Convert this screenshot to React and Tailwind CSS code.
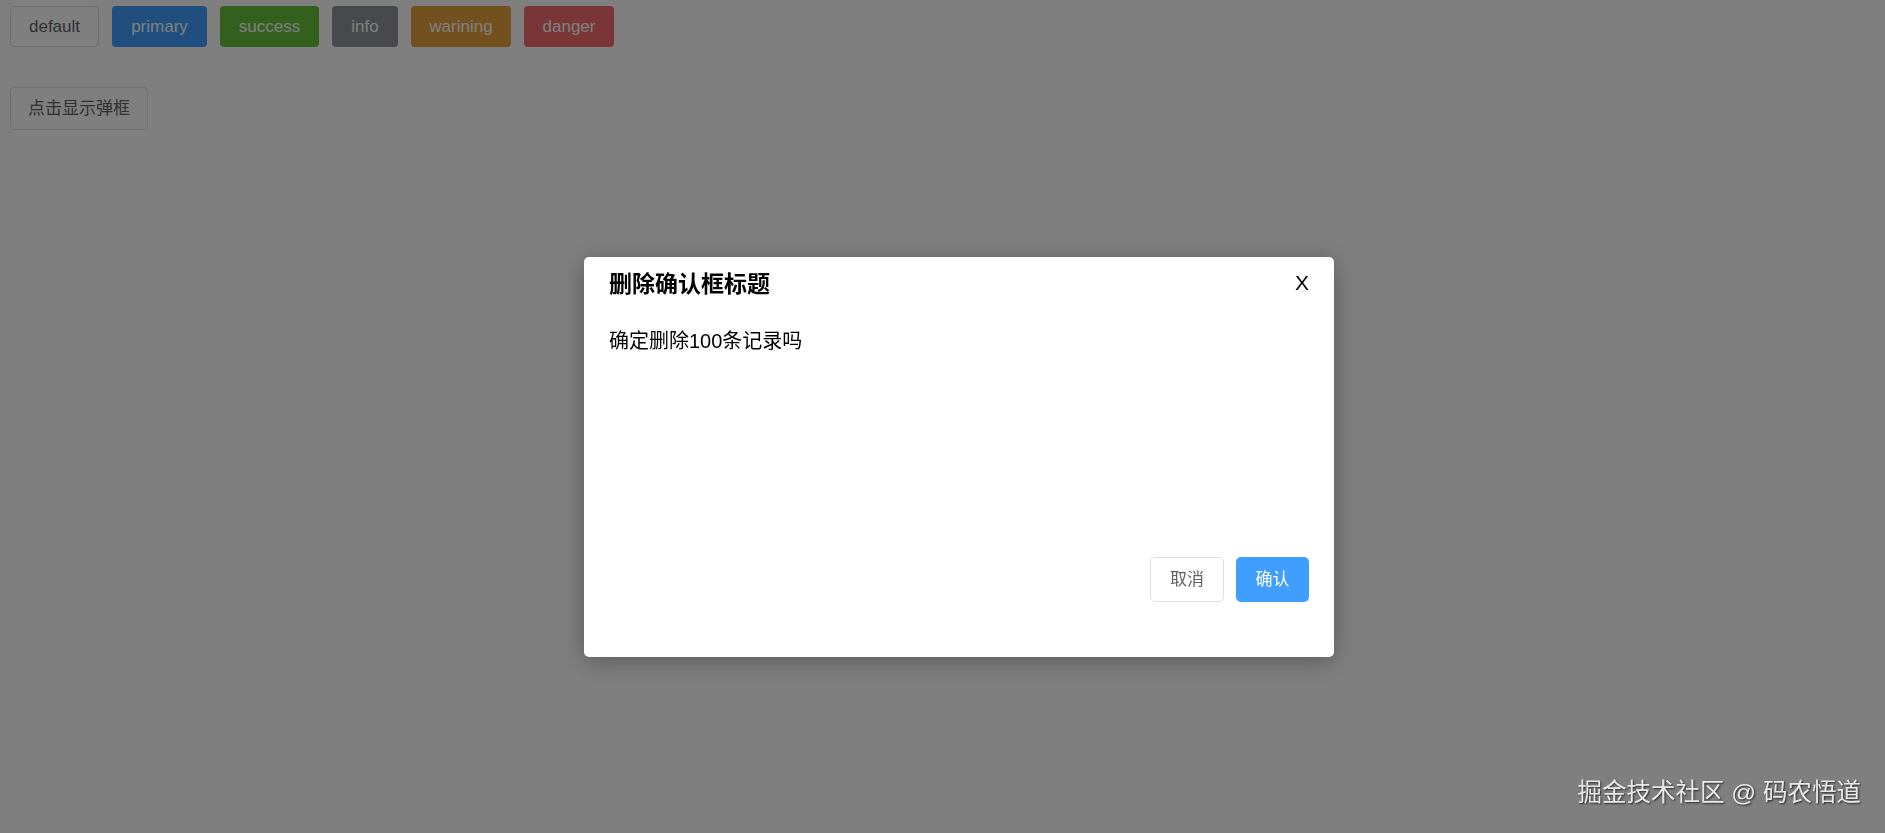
import React from "react";

const buttons = [
  { label: "default", cls: "bg-white text-[#606266] border border-[#dcdfe6] w-[89px]" },
  { label: "primary", cls: "bg-[#409eff] text-white w-[95px]" },
  { label: "success", cls: "bg-[#67c23a] text-white w-[99px]" },
  { label: "info", cls: "bg-[#909399] text-white w-[66px]" },
  { label: "warining", cls: "bg-[#e6a23c] text-white w-[100px]" },
  { label: "danger", cls: "bg-[#f56c6c] text-white w-[90px]" },
];

const font = "font-['Liberation_Sans','Noto_Sans_CJK_SC',sans-serif]";

const ConfirmDialog = ({ title, content }) => {
  return (
    <div className="fixed inset-0 bg-black/50 flex items-start justify-center pt-[257px] pl-[33px]">
      <div className="w-[750px] h-[400px] bg-white rounded-[5px] shadow-[0_4px_24px_rgba(0,0,0,0.3)] flex flex-col">
        {/* header */}
        <div className="flex items-center justify-between px-[25px] pt-[11px]">
          <h2 className="text-[23px] leading-[32px] font-bold text-black">{title}</h2>
          <button className="text-[21px] leading-[28px] -mt-[3px] text-black">X</button>
        </div>

        {/* body */}
        <div className="flex-1 px-[25px] pt-[27px] text-[20px] leading-[28px] text-black">
          {content}
        </div>

        {/* footer */}
        <div className="flex justify-end gap-[12px] px-[25px] pb-[55px]">
          <button className="w-[74px] h-[45px] rounded-[5px] border border-[#dcdfe6] bg-white text-[#606266] text-[17px]">
            取消
          </button>
          <button className="w-[73px] h-[45px] rounded-[5px] bg-[#409eff] text-white text-[17px]">
            确认
          </button>
        </div>
      </div>
    </div>
  );
};

export default function App() {
  return (
    <div className={`min-h-screen bg-white ${font}`}>
      <div className="flex gap-[13px] pl-[10px] pt-[6px]">
        {buttons.map((b) => (
          <button
            key={b.label}
            className={"h-[41px] rounded-[4px] flex items-center justify-center text-[17px] " + b.cls}
          >
            {b.label}
          </button>
        ))}
      </div>

      <div className="pl-[10px] pt-[40px]">
        <button className="w-[138px] h-[43px] rounded-[4px] border border-[#dcdfe6] bg-white text-[#606266] text-[17px]">
          点击显示弹框
        </button>
      </div>

      <ConfirmDialog title="删除确认框标题" content="确定删除100条记录吗" />

      {/* watermark */}
      <div className="fixed right-[24px] bottom-[25px] text-[24.5px] leading-[30px] text-[#e8e8e8] [text-shadow:1px_1px_2px_rgba(0,0,0,0.7)]">
        掘金技术社区 @ 码农悟道
      </div>
    </div>
  );
}
